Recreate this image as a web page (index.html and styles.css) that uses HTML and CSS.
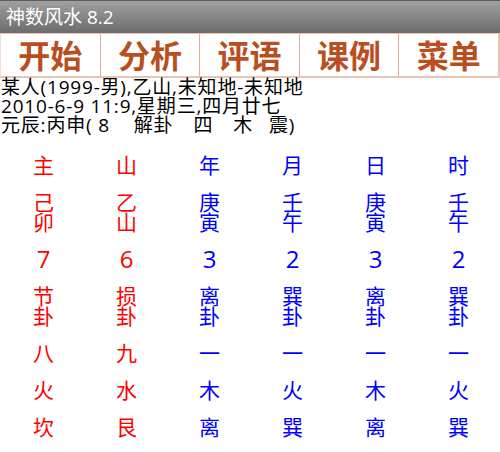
FILE: index.html
```html
<!DOCTYPE html>
<html>
<head>
<meta charset="utf-8">
<link rel="stylesheet" href="styles.css">
</head>
<body>
<div class="titlebar">神数风水 8.2</div>
<div class="tabs">
  <div class="tab">开始</div>
  <div class="tab">分析</div>
  <div class="tab">评语</div>
  <div class="tab">课例</div>
  <div class="tab last">菜单</div>
</div>
<div class="info">
  <div class="line">某人(1999-男),乙山,未知地-未知地</div>
  <div class="line">2010-6-9 11:9,星期三,四月廿七</div>
  <div class="line">元辰:丙申( 8<span class="g1">解卦</span><span class="g2">四</span><span class="g3">木</span><span class="g4">震</span>)</div>
</div>
<div class="grid">
  <div class="c r">主</div><div class="c r">山</div><div class="c b">年</div><div class="c b">月</div><div class="c b">日</div><div class="c b">时</div>
  <div class="c r">己<br>卯</div><div class="c r">乙<br>山</div><div class="c b">庚<br>寅</div><div class="c b">壬<br>午</div><div class="c b">庚<br>寅</div><div class="c b">壬<br>午</div>
  <div class="c n r">7</div><div class="c n r">6</div><div class="c n b">3</div><div class="c n b">2</div><div class="c n b">3</div><div class="c n b">2</div>
  <div class="c r">节<br>卦</div><div class="c r">损<br>卦</div><div class="c b">离<br>卦</div><div class="c b">巽<br>卦</div><div class="c b">离<br>卦</div><div class="c b">巽<br>卦</div>
  <div class="c r">八</div><div class="c r">九</div><div class="c b">一</div><div class="c b">一</div><div class="c b">一</div><div class="c b">一</div>
  <div class="c r">火</div><div class="c r">水</div><div class="c b">木</div><div class="c b">火</div><div class="c b">木</div><div class="c b">火</div>
  <div class="c r">坎</div><div class="c r">艮</div><div class="c b">离</div><div class="c b">巽</div><div class="c b">离</div><div class="c b">巽</div>
</div>
</body>
</html>
```
FILE: styles.css
```css
html, body {
  margin: 0;
  padding: 0;
  background: #ffffff;
}
body {
  width: 500px;
  height: 452px;
  overflow: hidden;
  font-family: "Open Sans", "Noto Sans CJK SC", sans-serif;
}
.titlebar {
  height: 33px;
  box-sizing: border-box;
  border-top: 1px solid #5c5c5c;
  background: linear-gradient(#a0a0a0, #6c6c6c);
  color: #ffffff;
  font-size: 19px;
  line-height: 32px;
  padding-left: 6px;
  font-family: "Open Sans", "Noto Sans CJK SC", sans-serif;
}
.tabs {
  display: flex;
  height: 45px;
  box-sizing: border-box;
  border-top: 1px solid #eac3b3;
  border-bottom: 2px solid #eac3b3;
  border-right: 2px solid #eac3b3;
  border-left: 1px solid #f3dcd2;
}
.tab {
  flex: 1;
  border-right: 1px solid #e2ad98;
  color: #b94e1f;
  font-weight: bold;
  font-size: 32px;
  line-height: 40px;
  text-align: center;
  font-family: "Noto Sans CJK SC", sans-serif;
}
.tab.last {
  border-right: none;
}
.info {
  padding-left: 1px;
  font-size: 19px;
  letter-spacing: 0.8px;
  line-height: 19px;
  color: #000000;
}
.line {
  white-space: nowrap;
}
.g1 { margin-left: 24px; }
.g2 { margin-left: 20px; }
.g3 { margin-left: 20px; }
.g4 { margin-left: 16px; }
.grid {
  display: grid;
  grid-template-columns: repeat(6, 1fr);
  row-gap: 17px;
  margin-top: 20px;
  padding-left: 2px;
}
.c {
  text-align: center;
  font-size: 21px;
  line-height: 20px;
}
.c.n {
  font-size: 24px;
}
.r { color: #ff0000; }
.b { color: #0000ff; }
```
